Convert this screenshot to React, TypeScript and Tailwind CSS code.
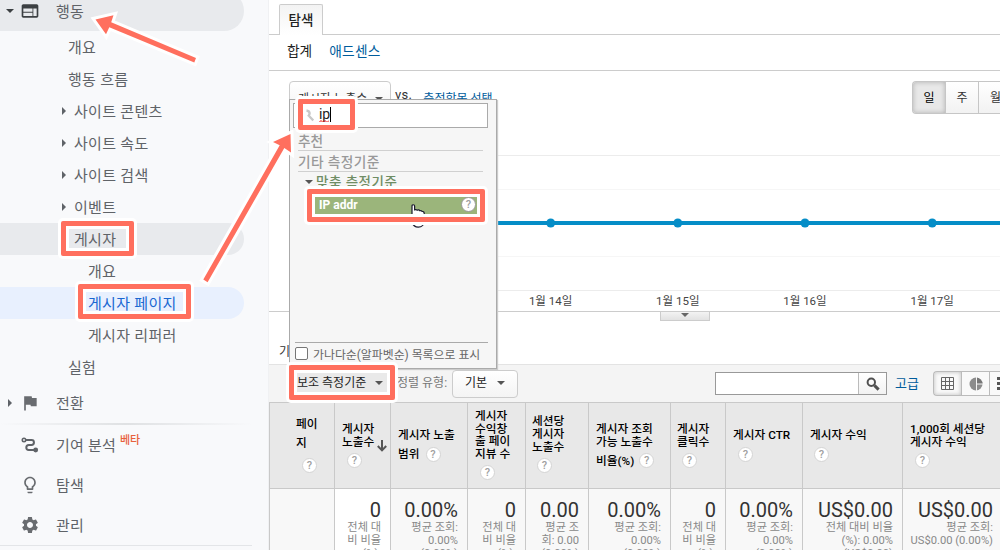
import type { ReactNode } from "react";
import clsx from "clsx";
import { MdFlag, MdLightbulbOutline, MdSettings, MdWeb } from "react-icons/md";

type NavRow = { label: string; indent: string; caret?: boolean; tone?: "open" | "active" };

const NAV: NavRow[] = [
  { label: "개요", indent: "pl-[68px]" },
  { label: "행동 흐름", indent: "pl-[68px]" },
  { label: "사이트 콘텐츠", indent: "pl-[62px]", caret: true },
  { label: "사이트 속도", indent: "pl-[62px]", caret: true },
  { label: "사이트 검색", indent: "pl-[62px]", caret: true },
  { label: "이벤트", indent: "pl-[62px]", caret: true },
  { label: "게시자", indent: "pl-[74px]", tone: "open" },
  { label: "개요", indent: "pl-[88px]" },
  { label: "게시자 페이지", indent: "pl-[88px]", tone: "active" },
  { label: "게시자 리퍼러", indent: "pl-[88px]" },
  { label: "실험", indent: "pl-[68px]" },
];

type Column = {
  width: string;
  head: string;
  lines: string[];
  gap?: string;
  tail?: string;
  help: string;
  sorted?: boolean;
  value?: string;
  sub?: string[];
};

const COLUMNS: Column[] = [
  { width: "w-[65px]", head: "pt-[12px] pl-[26px]", lines: ["페이", "지"], gap: "leading-[19px]", help: "mt-[5px] ml-[6px]" },
  { width: "w-[56px]", head: "pt-[20px] pl-[7px]", lines: ["게시자", "노출수"], help: "mt-[5px] ml-[5px]", sorted: true, value: "0", sub: ["전체 대", "비 비율", "(%):"] },
  { width: "w-[77px]", head: "pt-[26px] pl-[7px]", lines: ["게시자 노출"], tail: "범위", help: "ml-[6px]", value: "0.00%", sub: ["평균 조회:", "0.00%", "(0.00%)"] },
  { width: "w-[58px]", head: "pt-[7px] pl-[7px]", lines: ["게시자", "수익창", "출 페이", "지뷰 수"], help: "mt-[5px] ml-[5px]", value: "0", sub: ["전체 대", "비 비율", "(%):"] },
  { width: "w-[63px]", head: "pt-[12px] pl-[6px]", lines: ["세션당", "게시자", "노출수"], gap: "leading-[13px]", help: "mt-[4px] ml-[5px]", value: "0.00", sub: ["평균 조", "회: 0.00", "(0.00%)"] },
  { width: "w-[82px]", head: "pt-[20px] pl-[7px]", lines: ["게시자 조회", "가능 노출수"], tail: "비율(%)", help: "ml-[5px]", value: "0.00%", sub: ["평균 조회:", "0.00%", "(0.00%)"] },
  { width: "w-[55px]", head: "pt-[20px] pl-[6px]", lines: ["게시자", "클릭수"], help: "mt-[5px] ml-[5px]", value: "0", sub: ["전체 대", "비 비율", "(%):"] },
  { width: "w-[77px]", head: "pt-[26px] pl-[7px]", lines: ["게시자 CTR"], help: "mt-[5px] ml-[5px]", value: "0.00%", sub: ["평균 조회:", "0.00%", "(0.00%)"] },
  { width: "w-[100px]", head: "pt-[26px] pl-[7px]", lines: ["게시자 수익"], help: "mt-[5px] ml-[4px]", value: "US$0.00", sub: ["전체 대비 비율", "(%): 0.00%", "(US$0.00)"] },
  { width: "w-[100px]", head: "pt-[20px] pl-[7px]", lines: ["1,000회 세션당", "게시자 수익"], help: "mt-[5px] ml-[5px]", value: "US$0.00", sub: ["평균 조회:", "US$0.00 (0.00%)"] },
];

const DAYS = ["1월 14일", "1월 15일", "1월 16일", "1월 17일"];

function Caret({ className }: { className?: string }) {
  return (
    <svg viewBox="0 0 8 4" className={clsx("h-1 w-2 shrink-0", className)}>
      <path d="M0 0h8L4 4z" fill="currentColor" />
    </svg>
  );
}

function CaretRight({ className }: { className?: string }) {
  return (
    <svg viewBox="0 0 4 8" className={clsx("h-2 w-1 shrink-0", className)}>
      <path d="M0 0v8l4-4z" fill="currentColor" />
    </svg>
  );
}

function Help({ className }: { className?: string }) {
  return (
    <span
      className={clsx(
        "grid size-[15px] shrink-0 place-items-center rounded-full border bg-white text-[11px] leading-none font-medium text-[#a0a0a0]",
        className,
      )}
    >
      ?
    </span>
  );
}

function RouteIcon() {
  return (
    <svg viewBox="0 0 18 16" className="h-4 w-[18px]" fill="none" stroke="#5f6368" strokeWidth="2">
      <circle cx="3" cy="3" r="1.7" strokeWidth="1.6" />
      <path d="M5 3h5.5a2.4 2.4 0 0 1 0 4.9H7.8a2.5 2.5 0 0 0 0 5H14" />
      <circle cx="14.7" cy="13" r="2.4" fill="#5f6368" stroke="none" />
    </svg>
  );
}

function NavItem({ icon, children, caret }: { icon: ReactNode; children: ReactNode; caret?: boolean }) {
  return (
    <div className="flex h-10 items-center text-[15px] tracking-[0.2px] text-[#5f6368]">
      <span className="flex w-5 justify-center">{caret && <CaretRight />}</span>
      <span className="grid w-5 place-items-center text-[20px] text-[#696c70]">{icon}</span>
      <span className="ml-4 flex pt-0.5">{children}</span>
    </div>
  );
}

function Sidebar() {
  return (
    <nav className="h-[550px] w-[269px] shrink-0 overflow-hidden border-r border-[#f0f1f3] bg-[#f8f9fb]">
      <div className="-mt-[9px] flex h-10 w-[244px] items-center rounded-r-full bg-[#e8eaed] text-[15px] text-[#5f6368]">
        <Caret className="ml-1.5 text-[#3c4043]" />
        <MdWeb className="ml-1.5 size-5 text-[#3c4043]" />
        <span className="ml-4 pt-0.5 tracking-[0.2px]">행동</span>
      </div>
      {NAV.map((row, i) => (
        <div
          key={i}
          className={clsx(
            "flex h-8 w-[244px] items-center rounded-r-full text-[15px] tracking-[0.3px]",
            row.indent,
            row.tone === "open" && "bg-[#e8eaed]",
            row.tone === "active" ? "bg-[#e8f0fe] text-[#1967d2]" : "text-[#5f6368]",
          )}
        >
          {row.caret && <CaretRight className="mr-2" />}
          <span className="pt-0.5">{row.label}</span>
        </div>
      ))}
      <NavItem icon={<MdFlag />} caret>
        전환
      </NavItem>
      <div className="h-0.5 w-[252px] bg-linear-to-r from-transparent via-[#dfe1e3] to-transparent" />
      <NavItem icon={<RouteIcon />}>
        기여 분석
        <sup className="top-0 ml-[4px] text-[11px] leading-3 font-medium tracking-normal text-[#e8613c]">베타</sup>
      </NavItem>
      <NavItem icon={<MdLightbulbOutline />}>탐색</NavItem>
      <NavItem icon={<MdSettings />}>관리</NavItem>
      <div className="w-[252px] border-t border-[#e3e5e8]" />
    </nav>
  );
}

function Chart() {
  return (
    <div className="relative h-[241px] border-b border-[#ccc]">
      <div className="flex items-start pt-2.5 pl-5">
        <div className="flex h-8 w-[102px] items-center justify-between rounded-sm border border-[#ccc] bg-linear-to-b from-white to-[#f4f4f4] pt-[3px] pr-[7px] pl-2 text-[12px] text-[#333]">
          게시자 노출수
          <Caret className="text-[#555]" />
        </div>
        <span className="mt-1 ml-1 text-[13px] leading-5 tracking-[0.3px] text-[#333]">vs.</span>
        <span className="mt-[8px] ml-[11px] text-[12px] leading-5 text-[#005c9c]">측정항목 선택</span>
        <div className="ml-auto flex h-[33px] w-[88px] overflow-hidden rounded-l-sm border border-r-0 border-[#c6c6c6] text-[12px] text-[#333]">
          <span className="grid w-[33px] shrink-0 place-items-center border-r border-[#c6c6c6] bg-[#e8e8e8] pt-px text-black shadow-[inset_0_0_5px_#b0b0b0]">일</span>
          <span className="grid w-[33px] shrink-0 place-items-center border-r border-[#c6c6c6] bg-linear-to-b from-white to-[#f2f2f2] pt-px">주</span>
          <span className="grid w-[33px] shrink-0 place-items-center bg-linear-to-b from-white to-[#f2f2f2] pt-px">월</span>
        </div>
      </div>
      <svg viewBox="0 0 731 150" className="absolute top-[83px] left-0 h-[150px] w-[731px]">
        {[1.5, 35.5, 102.5, 136.5].map((y, i) => (
          <path key={y} d={`M20 ${y}H731`} stroke={i === 0 || i === 3 ? "#ececec" : "#f6f6f6"} />
        ))}
        <path d="M20 69H731" stroke="#058dc7" strokeWidth="4" />
        {[281.7, 408.8, 536, 663.2].map((x) => (
          <circle key={x} cx={x} cy="69" r="4.5" fill="#058dc7" />
        ))}
      </svg>
      <div className="absolute bottom-0 left-[218px] flex h-[18px] items-center text-[11.5px] text-[#444]">
        {DAYS.map((d) => (
          <span key={d} className="w-[127.2px] text-center">
            {d}
          </span>
        ))}
      </div>
      <div className="absolute top-[241px] left-[391px] flex h-[9px] w-[50px] justify-center border border-t-0 border-[#ccc] bg-linear-to-b from-[#f3f3f3] to-[#e2e2e2] pt-px text-[#666]">
        <Caret />
      </div>
    </div>
  );
}

function Toolbar() {
  return (
    <div className="flex h-[38px] items-center border-t border-[#e3e3e3] bg-[#f4f4f4]">
      <div className="ml-6 flex h-7 w-[98px] items-center justify-between bg-[#e9e9e9] pr-2 pb-0.5 pl-1 text-[12px] text-[#222]">
        보조 측정기준
        <Caret className="text-[#555]" />
      </div>
      <span className="ml-1.5 w-[50px] pb-0.5 text-[12px] whitespace-nowrap text-[#777]">정렬 유형:</span>
      <div className="ml-[5px] flex h-7 w-[66px] items-center justify-between rounded-sm border border-[#ccc] bg-linear-to-b from-white to-[#f4f4f4] px-3 pb-0.5 text-[12px] text-[#222]">
        기본
        <Caret className="text-[#555]" />
      </div>
      <div className="ml-[197px] flex h-[23px] w-[172px] border border-[#999]">
        <div className="flex-1 bg-white" />
        <div className="grid w-7 place-items-center border-l border-[#bbb] bg-linear-to-b from-white to-[#f2f2f2]">
          <svg viewBox="0 0 14 14" className="size-3.5" fill="none" stroke="#505050">
            <circle cx="5.3" cy="5.3" r="3.7" strokeWidth="2" />
            <path d="M8.4 8.4l4.2 4.2" strokeWidth="3" />
          </svg>
        </div>
      </div>
      <span className="ml-2 text-[13px] text-[#005c9c]">고급</span>
      <div className="ml-auto flex h-[25px] w-[67px] overflow-hidden rounded-l-sm border border-r-0 border-[#bbb] bg-[#f9f9f9]">
        <span className="grid w-7 shrink-0 place-items-center border-r border-[#bbb] shadow-[inset_0_0_4px_#bbb]">
          <svg viewBox="0 0 13 13" className="size-[13px]" fill="none" stroke="#666">
            <path d="M.5 .5h12v12H.5zM4.5 0v13M8.5 0v13M0 4.5h13M0 8.5h13" />
          </svg>
        </span>
        <span className="grid w-7 shrink-0 place-items-center border-r border-[#bbb]">
          <svg viewBox="0 0 14 14" className="size-3.5">
            <circle cx="7" cy="7" r="6.5" fill="#8c8c8c" />
            <path d="M7 7V.5A6.5 6.5 0 0 1 13.5 7z" fill="#777" />
            <path d="M7.5 0v14M7.5 7H14" stroke="#f4f4f4" />
          </svg>
        </span>
        <svg viewBox="0 0 12 13" className="mt-[5px] ml-[7px] h-[13px] w-3 shrink-0" fill="#555">
          <path d="M0 0h4v3H0zM0 5h4v3H0zM0 10h4v3H0z" />
        </svg>
      </div>
    </div>
  );
}

function HeadCell({ col }: { col: Column }) {
  return (
    <div className={clsx("relative h-[86px] border-b border-[#c9c9c9] bg-[#e8e8e8] text-[11.7px] font-medium text-black", col.head)}>
      {col.lines.map((line) => (
        <div key={line} className={col.gap ?? "leading-[12.6px]"}>
          {line}
        </div>
      ))}
      {col.tail ? (
        <div className="mt-[5px] flex items-center leading-[14px]">
          {col.tail}
          <Help className={clsx("border-[#d4d4d4]", col.help)} />
        </div>
      ) : (
        <Help className={clsx("border-[#d4d4d4]", col.help)} />
      )}
      {col.sorted && (
        <svg viewBox="0 0 10 12" className="absolute top-[37px] right-[3px] h-3 w-2.5" fill="none" stroke="#555" strokeWidth="2">
          <path d="M5 0v10M.8 6L5 10.4 9.2 6" />
        </svg>
      )}
    </div>
  );
}

function Table() {
  return (
    <div className="flex h-[148px] w-[740px] border-t border-l border-[#c9c9c9]">
      {COLUMNS.map((col, i) => (
        <div key={i} className={clsx("shrink-0 border-r border-[#c9c9c9] whitespace-nowrap", col.width)}>
          <HeadCell col={col} />
          <div className={clsx("h-[61px] overflow-hidden pt-[9px] pr-[9px] text-right", i === 1 ? "bg-white" : "bg-[#f8f8f8]")}>
            <div className="h-[23px] text-[20px] leading-6 text-[#333]">{col.value}</div>
            {col.sub?.map((s) => (
              <div key={s} className="h-[13px] text-[11.2px] leading-[13px] text-[#888]">
                {s}
              </div>
            ))}
          </div>
        </div>
      ))}
    </div>
  );
}

function DimensionMenu() {
  return (
    <div className="absolute top-[99px] left-[289px] flex h-[270px] w-[208px] flex-col border border-[#aaa] bg-[#f6f6f6] px-[3px] pt-[3px] shadow-[1px_1px_1px_#ccc]">
      <div className="flex h-[25px] w-[195px] items-center border border-[#aaa] bg-white pb-[3px]">
        <svg viewBox="0 0 8 13" className="mt-[3px] ml-3 h-[13px] w-2" fill="none" stroke="#c8c8c8" strokeWidth="2.4">
          <path d="M.5 1.5c3.500.5 4 3.500 1.500 6M3.500 7.500l3.800 4" />
        </svg>
        <span className="relative ml-[5px] border-r border-black text-[14px] leading-[15px] tracking-[-0.2px] text-[#222]">
          ip
          {/* spellcheck squiggle */}
          <svg viewBox="0 0 10 3" className="absolute top-[13px] left-0 h-[3px] w-2.5" fill="none" stroke="#e00">
            <path d="M0 2.500l2-2 2 2 2-2 2 2 2-2" />
          </svg>
        </span>
      </div>
      <div className="mx-[5px] mt-[3px] h-5 w-[185px] border-b border-[#d0d0d0] text-[13.700px] leading-[21px] font-medium text-[#999]">추천</div>
      <div className="mx-[5px] h-[21px] w-[185px] border-b border-[#d0d0d0] text-[13.700px] leading-[23px] font-medium tracking-[0.4px] text-[#999]">기타 측정기준</div>
      <div className="ml-3 flex h-5 items-center text-[13.500px] font-medium tracking-[0.5px] text-[#6f8d64]">
        <Caret className="mr-[3px] text-[#555]" />
        <span className="pt-px">맞춤 측정기준</span>
      </div>
      <div className="mt-1 ml-[21px] flex h-[19px] w-[165px] items-center justify-between bg-[#9bb57b] pr-[3px] pb-0.5 pl-[5px] text-[12px] font-bold text-white">
        IP addr
        <Help className="border-[#999]" />
      </div>
      <div className="mt-auto ml-0.5 flex h-[26px] w-[193px] items-center border-t border-[#aaa] text-[11.900px] whitespace-nowrap text-[#666]">
        <span className="mt-[-4px] mr-[5px] size-[13px] shrink-0 rounded-[2px] border border-[#767676] bg-white" />
        가나다순(알파벳순) 목록으로 표시
      </div>
    </div>
  );
}

function Cursor() {
  return (
    <svg viewBox="0 0 16 24" className="absolute top-[204px] left-[410px] h-6 w-4" fill="white" stroke="#1a1a2e" strokeWidth="1.200">
      <path d="M2 13V2c0-1.700 2.600-1.700 2.600 0v4.500c0-1.300 2.700-1.300 2.700.2 0-1.100 2.500-1.100 2.500.6 0-1.100 2.400-.8 2.400.8 0-.9 2-.6 2 .8v8c0 3.500-2.200 6.300-6 6.300S3 21 2 18z" />
    </svg>
  );
}

// red frame with a white edge on both sides
function Marker({ className }: { className: string }) {
  return (
    <div className={clsx("absolute rounded-[2px] border-[5px] border-[#ff6f5e] shadow-[0_0_0_3px_white,inset_0_0_0_3px_white]", className)} />
  );
}

function Arrows() {
  return (
    <svg viewBox="0 0 1000 550" className="absolute inset-0 h-[550px] w-[1000px]" fill="#ff6f5e">
      <g stroke="white" strokeWidth="6" paintOrder="stroke">
        <path d="M95.500 19.500L113.500 15.300 111.200 22.300 196 58 194.300 62.600 109.300 27.200 106 34.300z" />
        <path d="M290.500 134L273 142 279.700 145.300 203.300 279.600 207.600 282.200 284.300 148 291 152.500z" />
      </g>
    </svg>
  );
}

export default function App() {
  return (
    <div className="relative flex h-[550px] w-[1000px] overflow-hidden bg-white font-['Roboto','Noto_Sans_CJK_KR',sans-serif]">
      <Sidebar />
      <main className="h-[550px] w-[731px] shrink-0 overflow-hidden">
        <div className="flex h-[35px] items-end border-b border-[#ccc] pl-2.5">
          <div className="-mb-px grid h-[31px] w-[44px] place-items-center rounded-t-[2px] border border-b-0 border-[#ccc] bg-linear-to-b from-[#f3f3f3] to-white text-[13.500px] font-medium text-[#222]">
            탐색
          </div>
        </div>
        <div className="flex h-9 items-center gap-[17px] border-b border-[#ccc] pb-[3px] pl-[18px] text-[13.700px] text-[#222]">
          <span>합계</span>
          <span className="tracking-[0.3px] text-[#005c9c]">애드센스</span>
        </div>
        <Chart />
        <div className="h-[52px] pt-[31px] pl-2.5 text-[12px] leading-[18px] text-[#333]">기</div>
        <Toolbar />
        <Table />
      </main>
      <DimensionMenu />
      <Cursor />
      <Marker className="top-[221px] left-[61px] h-[35px] w-[73px]" />
      <Marker className="top-[284px] left-[78px] h-[35px] w-[113px]" />
      <Marker className="top-[99px] left-[298px] h-[31px] w-[57px]" />
      <Marker className="top-[189px] left-[307px] h-[33px] w-[178px]" />
      <Marker className="top-[365px] left-[289px] h-[35px] w-[106px]" />
      <Arrows />
    </div>
  );
}
